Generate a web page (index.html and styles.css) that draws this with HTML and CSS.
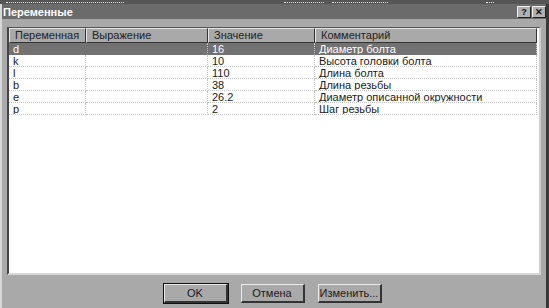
FILE: index.html
```html
<!DOCTYPE html>
<html lang="ru">
<head>
    <meta charset="UTF-8">
    <title>Переменные</title>
    <link rel="stylesheet" href="styles.css">
</head>
<body>
    <div class="topstrip">
        <span class="frag w1"></span>
        <span class="frag w2"></span>
        <span class="frag w3"></span>
        <span class="frag w4"></span>
    </div>
    <div class="window">
        <div class="titlebar">
            <span class="title">Переменные</span>
            <div class="tbuttons">
                <span class="tbtn">?</span>
                <span class="tbtn">&#x2715;</span>
            </div>
        </div>
        <div class="content">
            <div class="listbox">
                <div class="row head">
                    <div class="cell c1">Переменная</div>
                    <div class="cell c2">Выражение</div>
                    <div class="cell c3">Значение</div>
                    <div class="cell c4">Комментарий</div>
                </div>
                <div class="row sel">
                    <div class="cell c1">d</div>
                    <div class="cell c2"></div>
                    <div class="cell c3">16</div>
                    <div class="cell c4">Диаметр болта</div>
                </div>
                <div class="row">
                    <div class="cell c1">k</div>
                    <div class="cell c2"></div>
                    <div class="cell c3">10</div>
                    <div class="cell c4">Высота головки болта</div>
                </div>
                <div class="row">
                    <div class="cell c1">l</div>
                    <div class="cell c2"></div>
                    <div class="cell c3">110</div>
                    <div class="cell c4">Длина болта</div>
                </div>
                <div class="row">
                    <div class="cell c1">b</div>
                    <div class="cell c2"></div>
                    <div class="cell c3">38</div>
                    <div class="cell c4">Длина резьбы</div>
                </div>
                <div class="row">
                    <div class="cell c1">e</div>
                    <div class="cell c2"></div>
                    <div class="cell c3">26.2</div>
                    <div class="cell c4">Диаметр описанной окружности</div>
                </div>
                <div class="row">
                    <div class="cell c1">p</div>
                    <div class="cell c2"></div>
                    <div class="cell c3">2</div>
                    <div class="cell c4">Шаг резьбы</div>
                </div>
            </div>
            <div class="buttons">
                <button class="btn default">OK</button>
                <button class="btn">Отмена</button>
                <button class="btn">Изменить...</button>
            </div>
        </div>
    </div>
</body>
</html>
```

FILE: styles.css
```css
body {
    margin: 0;
    width: 549px;
    height: 308px;
    overflow: hidden;
    background-color: #a9a9a9;
    font-family: "Liberation Sans", Arial, sans-serif;
    font-size: 11px;
    color: #1a1a1a;
}

/* strip of the window behind, only the bottom of its text shows */
.topstrip {
    height: 4px;
    box-sizing: border-box;
    background-color: #555;
    display: flex;
    align-items: flex-start;
    padding-left: 6px;
}

.frag {
    height: 2px;
    border-bottom: 1px dotted #e8e8e8;
}

.w1 { width: 118px; }
.w2 { width: 40px; margin-left: 160px; }
.w3 { width: 56px; margin-left: 8px; }
.w4 { width: 8px; margin-left: 98px; }

.window {
    height: 304px;
    border-left: 2px solid #d8d8d8;
    border-right: 3px solid #3a3a3a;
    box-sizing: border-box;
}

.titlebar {
    height: 15px;
    background-color: #6b6b6b;
    display: flex;
    align-items: center;
    justify-content: space-between;
    padding-left: 1px;
}

.title {
    color: #fff;
    font-weight: bold;
    font-size: 11px;
}

.tbuttons {
    display: flex;
    gap: 1px;
}

.tbtn {
    width: 14px;
    height: 12px;
    box-sizing: border-box;
    background-color: #b0b0b0;
    border-top: 1px solid #eee;
    border-left: 1px solid #eee;
    border-right: 1px solid #222;
    border-bottom: 1px solid #222;
    font-size: 9px;
    font-weight: bold;
    line-height: 10px;
    text-align: center;
    color: #111;
}

.content {
    padding: 8px 2px 0 5px;
}

.listbox {
    width: 534px;
    height: 248px;
    box-sizing: border-box;
    background-color: #fff;
    border-top: 1px solid #555;
    border-left: 2px solid #444;
    border-right: 2px solid #cfcfcf;
    border-bottom: 2px solid #d8d8d8;
}

.row {
    display: flex;
    height: 12px;
    line-height: 12px;
}

.cell {
    box-sizing: border-box;
    padding-left: 4px;
    white-space: nowrap;
    overflow: hidden;
    border-bottom: 1px dotted #c4c4c4;
    border-right: 1px dotted #c4c4c4;
}

.c1 { width: 77px; }
.c2 { width: 122px; }
.c3 { width: 107px; }
.c4 { width: 222px; }

.row.head {
    height: 15px;
    line-height: 13px;
}

.row.head .cell {
    background-color: #a9a9a9;
    color: #222;
    border-top: 1px solid #e4e4e4;
    border-left: 1px solid #e4e4e4;
    border-right: 1px solid #333;
    border-bottom: 1px solid #333;
    padding-left: 5px;
}

.row.sel .cell {
    background-color: #727272;
    color: #fff;
    border-bottom-color: #727272;
}

.row.sel .c1 {
    border-right-color: #727272;
}

.buttons {
    display: flex;
    justify-content: center;
    gap: 13px;
    margin-top: 9px;
    padding-right: 6px;
}

.btn {
    width: 64px;
    height: 19px;
    box-sizing: border-box;
    background-color: #a9a9a9;
    font-family: "Liberation Sans", Arial, sans-serif;
    font-size: 11px;
    color: #1a1a1a;
    padding: 0;
    border-top: 1px solid #eaeaea;
    border-left: 1px solid #eaeaea;
    border-right: 2px solid #333;
    border-bottom: 2px solid #333;
}

.btn.default {
    outline: 1px solid #111;
}
```
